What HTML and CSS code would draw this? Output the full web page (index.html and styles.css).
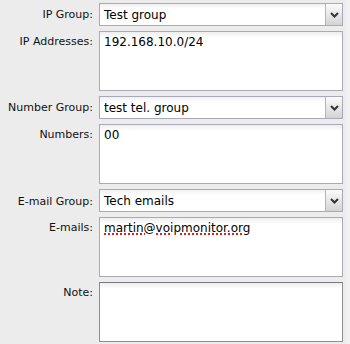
FILE: index.html
```html
<!DOCTYPE html>
<html>
	<head>
		<title>Group settings</title>
		<link rel="stylesheet" href="styles.css">
	</head>
	<body>
		<form class="form">
			<label class="label">IP Group:</label>
			<div class="select">
				<span class="select-value">Test group</span>
				<span class="select-button"><svg width="9" height="6" viewBox="0 0 9 6"><path d="M1 1 L4.5 4.5 L8 1" fill="none" stroke="#333" stroke-width="2"/></svg></span>
			</div>

			<label class="label label-top">IP Addresses:</label>
			<div class="textarea">192.168.10.0/24</div>

			<label class="label">Number Group:</label>
			<div class="select">
				<span class="select-value">test tel. group</span>
				<span class="select-button"><svg width="9" height="6" viewBox="0 0 9 6"><path d="M1 1 L4.5 4.5 L8 1" fill="none" stroke="#333" stroke-width="2"/></svg></span>
			</div>

			<label class="label label-top">Numbers:</label>
			<div class="textarea">00</div>

			<label class="label">E-mail Group:</label>
			<div class="select">
				<span class="select-value">Tech emails</span>
				<span class="select-button"><svg width="9" height="6" viewBox="0 0 9 6"><path d="M1 1 L4.5 4.5 L8 1" fill="none" stroke="#333" stroke-width="2"/></svg></span>
			</div>

			<label class="label label-top">E-mails:</label>
			<div class="textarea"><span class="misspelled">martin@voipmonitor.org</span></div>

			<label class="label label-top">Note:</label>
			<div class="textarea textarea-dark"></div>
		</form>
	</body>
</html>
```
FILE: styles.css
```css
* {
	box-sizing: border-box;
}

body {
	margin: 0;
	background-color: #ececec;
	font-family: 'DejaVu Sans', Verdana, sans-serif;
	font-size: 11px;
	color: #000;
}

.form {
	display: grid;
	grid-template-columns: 93px 244px;
	column-gap: 6px;
	row-gap: 4px;
	padding: 3px 0 0 0;
	height: 344px;
	border-right: 4px solid #f1f1f1;
	width: 350px;
}

.label {
	text-align: right;
	align-self: center;
	color: #111;
	white-space: nowrap;
}
.label-top {
	align-self: start;
	padding-top: 4px;
}

.select {
	display: flex;
	height: 23px;
	border: 1px solid #a9a9ba;
	background: linear-gradient(#f0f0f0, #fff 5px);
}
.select-value {
	flex: 1;
	padding: 4px 0 0 4px;
	font-size: 12px;
}
.select-button {
	display: flex;
	align-items: center;
	justify-content: center;
	width: 17px;
	border-left: 1px solid #b4b4c0;
	background: linear-gradient(#fbfbfb, #d4d4d4);
}

.textarea {
	height: 60px;
	margin-bottom: 1px;
	border: 1px solid #a9a9ba;
	background: linear-gradient(#eeeeee, #fff 6px);
	padding: 3px 0 0 4px;
	font-size: 12px;
}
.textarea-dark {
	border-color: #8e8e8e;
	border-top-color: #7a7a7a;
}

.misspelled {
	text-decoration: underline dotted #e02020;
	text-decoration-thickness: 2px;
	text-underline-offset: 2px;
}
```
